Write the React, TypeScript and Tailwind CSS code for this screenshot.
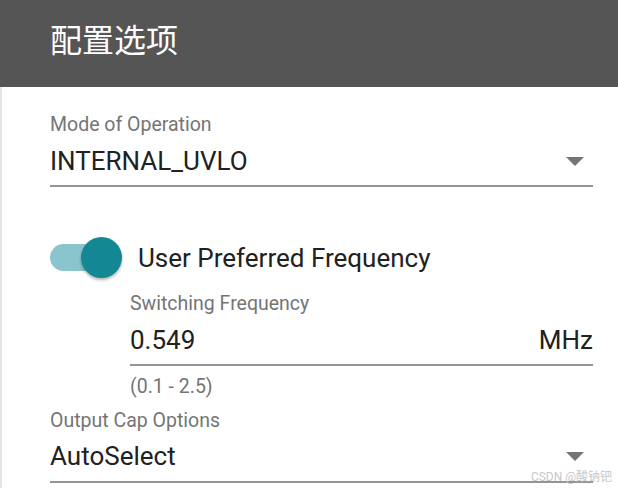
const font = { fontFamily: 'Roboto, "Noto Sans CJK SC", sans-serif' }

function Arrow() {
  return (
    <svg width="18" height="9" viewBox="0 0 18 9" className="shrink-0 block">
      <path d="M0 0 L18 0 L9 9 Z" fill="#757575" />
    </svg>
  )
}

export default function App() {
  return (
    <div className="w-[618px] h-[488px] overflow-hidden bg-white" style={font}>
      <div className="h-[87px] bg-[#555555] pl-[50px] pt-[20px]">
        <h1 className="text-[32px] leading-[42px] text-white">配置选项</h1>
      </div>

      <div className="h-[401px] border-l-2 border-[#e6e6e6] pl-[48px] pr-[25px] relative">
        {/* Mode of Operation */}
        <div className="pt-[27px]">
          <div className="text-[19.5px] leading-[22px] text-[#757575]">Mode of Operation</div>
          <div className="flex items-center justify-between pt-[10px] pb-[9px] border-b-2 border-[#949494]">
            <span className="text-[26px] leading-[30px] text-[#212121]">INTERNAL_UVLO</span>
            <span className="mr-[9px]"><Arrow /></span>
          </div>
        </div>

        {/* Toggle */}
        <div className="mt-[50px] h-[41px] flex items-center">
          <div className="relative w-[88px] h-[41px] shrink-0">
            <div className="absolute left-0 top-[7px] w-[62px] h-[27px] rounded-full bg-[#8ac4cc]" />
            <div className="absolute left-[31px] top-0 w-[41px] h-[41px] rounded-full bg-[#148795] shadow-[0_2px_3px_rgba(0,0,0,0.3)]" />
          </div>
          <span className="text-[26px] leading-[30px] text-[#212121]">User Preferred Frequency</span>
        </div>

        {/* Switching Frequency */}
        <div className="ml-[80px] mt-[15px]">
          <div className="text-[19.5px] leading-[22px] text-[#757575]">Switching Frequency</div>
          <div className="flex items-center justify-between pt-[10px] pb-[9px] border-b-2 border-[#949494]">
            <span className="text-[26px] leading-[30px] text-[#212121]">0.549</span>
            <span className="text-[26px] leading-[30px] text-[#212121]">MHz</span>
          </div>
          <div className="mt-[10px] text-[19.5px] leading-[22px] text-[#757575]">(0.1 - 2.5)</div>
        </div>

        {/* Output Cap Options */}
        <div className="mt-[12px]">
          <div className="text-[19.5px] leading-[22px] text-[#757575]">Output Cap Options</div>
          <div className="flex items-center justify-between pt-[9px] pb-[10px] border-b-2 border-[#949494]">
            <span className="text-[26px] leading-[30px] text-[#212121]">AutoSelect</span>
            <span className="mr-[9px]"><Arrow /></span>
          </div>
        </div>

        <div className="absolute right-[6px] bottom-[4px] text-[12px] leading-[14px] text-[#c8c8c8]">CSDN @酸钠钯</div>
      </div>
    </div>
  )
}
